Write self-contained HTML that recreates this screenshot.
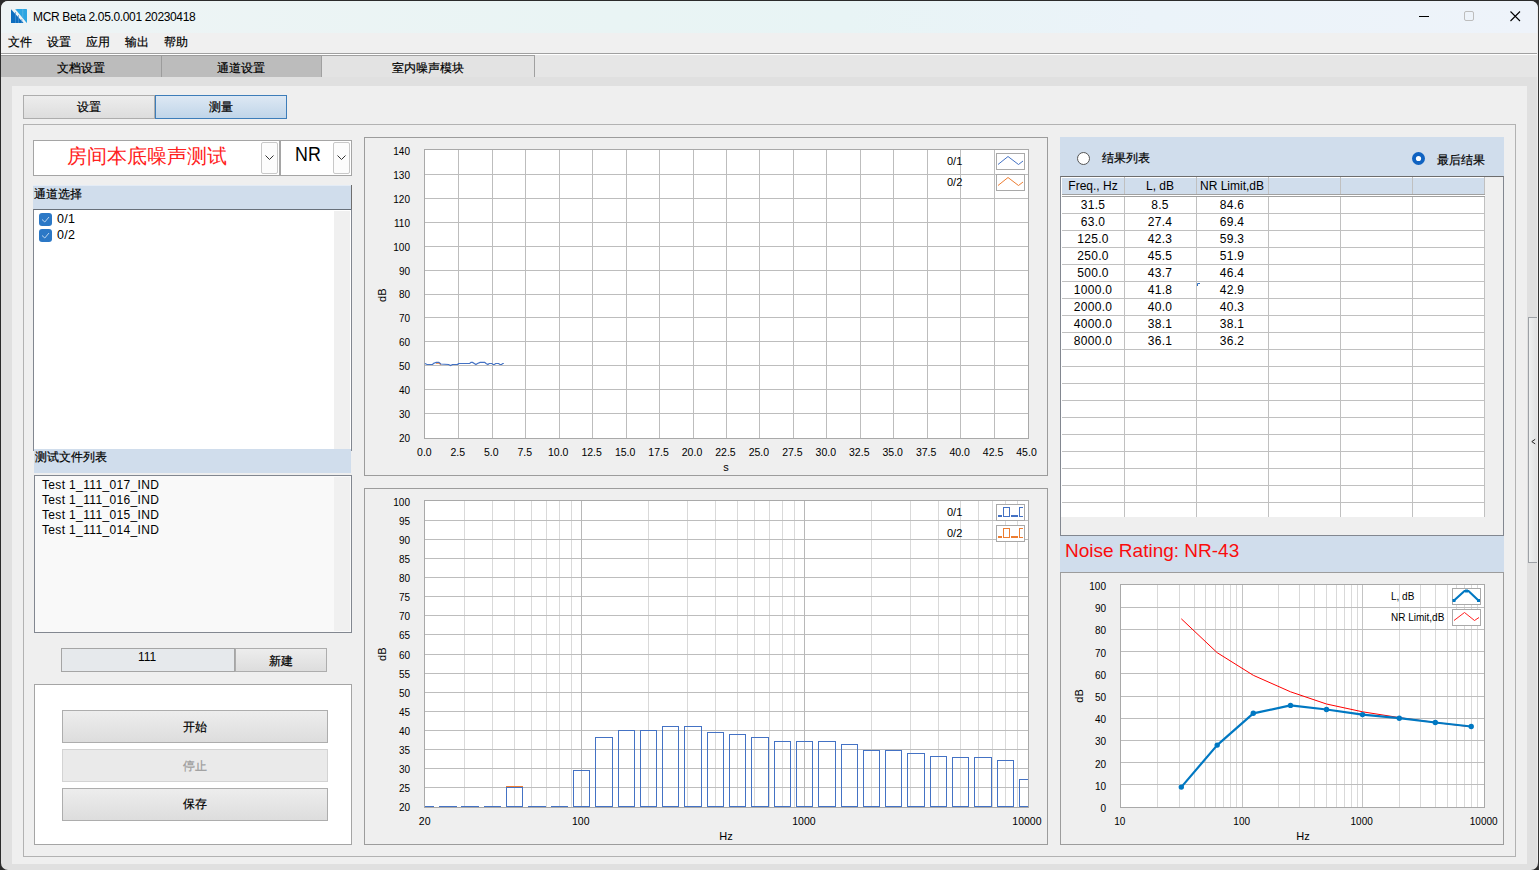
<!DOCTYPE html><html><head><meta charset="utf-8"><style>
*{margin:0;padding:0;box-sizing:border-box}
html,body{width:1539px;height:870px;overflow:hidden;background:#2b2b2b;font-family:"Liberation Sans", sans-serif;color:#000}
.t{position:absolute;white-space:nowrap;line-height:1}
.cj{-webkit-text-stroke:0.2px currentColor}
.btn{-webkit-text-stroke:0.2px currentColor;position:absolute;background:linear-gradient(#ededed,#dddddd);border:1px solid #adadad;font-size:12px;text-align:center}
svg{position:absolute;left:0;top:0}
</style></head><body>

<div style="position:absolute;left:1px;top:1px;width:1537px;height:869px;background:#e0e0e0;border-radius:7px;overflow:hidden"></div>
<div style="position:absolute;left:1px;top:1px;width:1537px;height:32px;background:linear-gradient(90deg,#eef4f5 0%,#e9f4f4 40%,#e8f4f5 55%,#ebf3f9 75%,#eef3fa 100%);border-radius:7px 7px 0 0"></div>
<div class="t" style="left:33px;top:11px;font-size:12px;letter-spacing:-0.35px;color:#000">MCR Beta 2.05.0.001 20230418</div>
<svg width="40" height="30" style="left:0;top:0">
<polygon points="11,9.3 23.6,23 11,23" fill="#0d6ebf"/>
<polygon points="15.2,9 26.4,9 27,9.6 27,23 26.8,23" fill="#2ba5e2"/>
<rect x="15.1" y="12" width="0.7" height="11" fill="#4c93d0"/>
<rect x="18.3" y="15" width="0.7" height="8" fill="#4c93d0"/>
<rect x="21.5" y="19" width="0.7" height="4" fill="#4c93d0"/>
<rect x="16.3" y="9" width="0.6" height="2" fill="#62b8e6"/>
<rect x="22.5" y="9" width="0.7" height="9" fill="#62b8e6"/>
</svg>
<div style="position:absolute;left:1419px;top:16px;width:10px;height:1px;background:#000"></div>
<div style="position:absolute;left:1464px;top:11px;width:10px;height:10px;border:1px solid #bdbdbd;border-radius:2px"></div>
<svg width="1539" height="40" style="left:0;top:0"><path d="M1510.5 11.5 L1520 21 M1520 11.5 L1510.5 21" stroke="#000" stroke-width="1.1"/></svg>
<div style="position:absolute;left:1px;top:33px;width:1537px;height:20px;background:#f0f0f0"></div>
<div class="t" style="left:8px;top:36px;font-size:12px;-webkit-text-stroke:0.2px #000">文件</div>
<div class="t" style="left:47px;top:36px;font-size:12px;-webkit-text-stroke:0.2px #000">设置</div>
<div class="t" style="left:86px;top:36px;font-size:12px;-webkit-text-stroke:0.2px #000">应用</div>
<div class="t" style="left:125px;top:36px;font-size:12px;-webkit-text-stroke:0.2px #000">输出</div>
<div class="t" style="left:164px;top:36px;font-size:12px;-webkit-text-stroke:0.2px #000">帮助</div>
<div style="position:absolute;left:1px;top:53px;width:1537px;height:1px;background:#a0a0a0"></div>
<div style="position:absolute;left:1px;top:54px;width:1537px;height:1px;background:#ffffff"></div>
<div style="position:absolute;left:1px;top:55px;width:1537px;height:22px;background:#e6e6e6"></div>
<div style="position:absolute;left:1px;top:55px;width:161px;height:22px;background:#bcbcbc;border-top:1px solid #9c9c9c;border-right:1px solid #9c9c9c"></div>
<div style="position:absolute;left:161px;top:55px;width:161px;height:22px;background:#bcbcbc;border:1px solid #9c9c9c;border-bottom:none"></div>
<div style="position:absolute;left:321px;top:55px;width:214px;height:22px;background:#e3e3e3;border:1px solid #a0a0a0;border-bottom:none"></div>
<div class="t" style="left:57px;top:62px;font-size:12px;-webkit-text-stroke:0.2px #000">文档设置</div>
<div class="t" style="left:217px;top:62px;font-size:12px;-webkit-text-stroke:0.2px #000">通道设置</div>
<div class="t" style="left:392px;top:62px;font-size:12px;-webkit-text-stroke:0.2px #000">室内噪声模块</div>
<div style="position:absolute;left:1px;top:77px;width:1537px;height:9px;background:#e0e0e0"></div>
<div style="position:absolute;left:12px;top:86px;width:1515px;height:778px;background:#efefef"></div>
<div class="btn" style="left:23px;top:95px;width:132px;height:24px;line-height:22px">设置</div>
<div class="btn" style="left:155px;top:95px;width:132px;height:24px;line-height:22px;background:linear-gradient(#dde8f4,#c0d5e9);border-color:#3d7db9">测量</div>
<div style="position:absolute;left:23px;top:124px;width:1493px;height:733px;border:1px solid #b2b2b2"></div>
<div style="position:absolute;left:33px;top:140px;width:247px;height:36px;background:#fff;border:1px solid #a5a5a5"></div>
<div style="position:absolute;left:261px;top:142px;width:17px;height:32px;background:#fcfcfc;border:1px solid #c8c8c8;border-radius:2px"></div>
<div style="position:absolute;left:280px;top:140px;width:72px;height:36px;background:#fff;border:1px solid #a5a5a5"></div>
<div style="position:absolute;left:333px;top:142px;width:17px;height:32px;background:#fcfcfc;border:1px solid #c8c8c8;border-radius:2px"></div>
<svg width="400" height="200"><path d="M265.5 155.5 L269.5 159.5 L273.5 155.5 M337.5 155.5 L341.5 159.5 L345.5 155.5" fill="none" stroke="#333" stroke-width="1"/></svg>
<div class="t" style="left:67px;top:146px;font-size:20px;color:#ff2020;font-weight:200">房间本底噪声测试</div>
<div class="t" style="left:295px;top:143px;font-size:21px;transform:scaleX(0.85);transform-origin:0 0">NR</div>
<div style="position:absolute;left:33px;top:185px;width:319px;height:25px;background:linear-gradient(#e4ecf6 0,#e4ecf6 1px,#d0ddec 1px);border-right:1px solid #6e6e6e"></div>
<div class="t" style="left:34px;top:188px;font-size:12px;-webkit-text-stroke:0.2px #000">通道选择</div>
<div style="position:absolute;left:33px;top:209px;width:319px;height:242px;background:#fff;border:1px solid #828790;border-top:1px solid #68707a;border-bottom:none"></div>
<div style="position:absolute;left:334px;top:211px;width:16px;height:240px;background:#f0f0f0"></div>
<div style="position:absolute;left:39px;top:213px;width:13px;height:13px;background:#2b78c6;border-radius:3px"></div>
<svg width="60" height="260"><path d="M42 219.5 L44.8 222 L49 217" fill="none" stroke="#bcd6f0" stroke-width="1"/></svg>
<div class="t" style="left:57px;top:213px;font-size:12.5px;letter-spacing:0.3px">0/1</div>
<div style="position:absolute;left:39px;top:229px;width:13px;height:13px;background:#2b78c6;border-radius:3px"></div>
<svg width="60" height="260"><path d="M42 235.5 L44.8 238 L49 233" fill="none" stroke="#bcd6f0" stroke-width="1"/></svg>
<div class="t" style="left:57px;top:229px;font-size:12.5px;letter-spacing:0.3px">0/2</div>
<div style="position:absolute;left:34px;top:449px;width:317px;height:24px;background:#d0ddec"></div>
<div class="t" style="left:35px;top:451px;font-size:12px;-webkit-text-stroke:0.2px #000">测试文件列表</div>
<div style="position:absolute;left:34px;top:475px;width:318px;height:158px;background:#f9f9f9;border:1px solid #828790"></div>
<div style="position:absolute;left:334px;top:477px;width:16px;height:154px;background:#f0f0f0"></div>
<div class="t" style="left:42px;top:479px;font-size:12px;letter-spacing:0.35px">Test 1_111_017_IND</div>
<div class="t" style="left:42px;top:494px;font-size:12px;letter-spacing:0.35px">Test 1_111_016_IND</div>
<div class="t" style="left:42px;top:509px;font-size:12px;letter-spacing:0.35px">Test 1_111_015_IND</div>
<div class="t" style="left:42px;top:524px;font-size:12px;letter-spacing:0.35px">Test 1_111_014_IND</div>
<div style="position:absolute;left:61px;top:648px;width:174px;height:24px;background:#e6e9ec;border:1px solid #a5a5a5"></div>
<div class="t" style="left:138px;top:651px;font-size:12px">111</div>
<div class="btn" style="left:235px;top:648px;width:92px;height:24px;line-height:24px">新建</div>
<div style="position:absolute;left:34px;top:684px;width:318px;height:161px;background:#fff;border:1px solid #a5a5a5"></div>
<div class="btn" style="left:62px;top:710px;width:266px;height:33px;line-height:33px">开始</div>
<div class="btn" style="left:62px;top:749px;width:266px;height:33px;line-height:33px;background:#eaeaea;border-color:#d3d3d3;color:#9a9a9a">停止</div>
<div class="btn" style="left:62px;top:788px;width:266px;height:33px;line-height:31px">保存</div>
<svg width="1539" height="870" style="left:0;top:0" shape-rendering="crispEdges">
<rect x="364.5" y="137.5" width="683" height="338" fill="none" stroke="#9c9c9c"/>
<rect x="424" y="149" width="605" height="290" fill="#fff"/>
<rect x="458" y="149" width="1" height="290" fill="#bdbdbd"/>
<rect x="492" y="149" width="1" height="290" fill="#bdbdbd"/>
<rect x="525" y="149" width="1" height="290" fill="#bdbdbd"/>
<rect x="559" y="149" width="1" height="290" fill="#bdbdbd"/>
<rect x="592" y="149" width="1" height="290" fill="#bdbdbd"/>
<rect x="626" y="149" width="1" height="290" fill="#bdbdbd"/>
<rect x="659" y="149" width="1" height="290" fill="#bdbdbd"/>
<rect x="693" y="149" width="1" height="290" fill="#bdbdbd"/>
<rect x="726" y="149" width="1" height="290" fill="#bdbdbd"/>
<rect x="759" y="149" width="1" height="290" fill="#bdbdbd"/>
<rect x="793" y="149" width="1" height="290" fill="#bdbdbd"/>
<rect x="826" y="149" width="1" height="290" fill="#bdbdbd"/>
<rect x="860" y="149" width="1" height="290" fill="#bdbdbd"/>
<rect x="893" y="149" width="1" height="290" fill="#bdbdbd"/>
<rect x="927" y="149" width="1" height="290" fill="#bdbdbd"/>
<rect x="960" y="149" width="1" height="290" fill="#bdbdbd"/>
<rect x="994" y="149" width="1" height="290" fill="#bdbdbd"/>
<rect x="424" y="413" width="605" height="1" fill="#bdbdbd"/>
<rect x="424" y="389" width="605" height="1" fill="#bdbdbd"/>
<rect x="424" y="365" width="605" height="1" fill="#bdbdbd"/>
<rect x="424" y="341" width="605" height="1" fill="#bdbdbd"/>
<rect x="424" y="317" width="605" height="1" fill="#bdbdbd"/>
<rect x="424" y="294" width="605" height="1" fill="#bdbdbd"/>
<rect x="424" y="270" width="605" height="1" fill="#bdbdbd"/>
<rect x="424" y="246" width="605" height="1" fill="#bdbdbd"/>
<rect x="424" y="222" width="605" height="1" fill="#bdbdbd"/>
<rect x="424" y="198" width="605" height="1" fill="#bdbdbd"/>
<rect x="424" y="174" width="605" height="1" fill="#bdbdbd"/>
<rect x="424.5" y="149.5" width="604" height="289" fill="none" stroke="#a9a9a9"/>
</svg>
<svg width="1539" height="870" style="left:0;top:0" font-family="Liberation Sans, sans-serif">
<text x="410" y="442" font-size="10" text-anchor="end" >20</text>
<text x="410" y="418" font-size="10" text-anchor="end" >30</text>
<text x="410" y="394" font-size="10" text-anchor="end" >40</text>
<text x="410" y="370" font-size="10" text-anchor="end" >50</text>
<text x="410" y="346" font-size="10" text-anchor="end" >60</text>
<text x="410" y="322" font-size="10" text-anchor="end" >70</text>
<text x="410" y="298" font-size="10" text-anchor="end" >80</text>
<text x="410" y="275" font-size="10" text-anchor="end" >90</text>
<text x="410" y="251" font-size="10" text-anchor="end" >100</text>
<text x="410" y="227" font-size="10" text-anchor="end" >110</text>
<text x="410" y="203" font-size="10" text-anchor="end" >120</text>
<text x="410" y="179" font-size="10" text-anchor="end" >130</text>
<text x="410" y="155" font-size="10" text-anchor="end" >140</text>
<text x="424.4" y="456" font-size="10.5" text-anchor="middle" >0.0</text>
<text x="457.84999999999997" y="456" font-size="10.5" text-anchor="middle" >2.5</text>
<text x="491.29999999999995" y="456" font-size="10.5" text-anchor="middle" >5.0</text>
<text x="524.75" y="456" font-size="10.5" text-anchor="middle" >7.5</text>
<text x="558.2" y="456" font-size="10.5" text-anchor="middle" >10.0</text>
<text x="591.65" y="456" font-size="10.5" text-anchor="middle" >12.5</text>
<text x="625.1" y="456" font-size="10.5" text-anchor="middle" >15.0</text>
<text x="658.55" y="456" font-size="10.5" text-anchor="middle" >17.5</text>
<text x="692.0" y="456" font-size="10.5" text-anchor="middle" >20.0</text>
<text x="725.45" y="456" font-size="10.5" text-anchor="middle" >22.5</text>
<text x="758.9" y="456" font-size="10.5" text-anchor="middle" >25.0</text>
<text x="792.35" y="456" font-size="10.5" text-anchor="middle" >27.5</text>
<text x="825.8" y="456" font-size="10.5" text-anchor="middle" >30.0</text>
<text x="859.25" y="456" font-size="10.5" text-anchor="middle" >32.5</text>
<text x="892.7" y="456" font-size="10.5" text-anchor="middle" >35.0</text>
<text x="926.1500000000001" y="456" font-size="10.5" text-anchor="middle" >37.5</text>
<text x="959.6" y="456" font-size="10.5" text-anchor="middle" >40.0</text>
<text x="993.0500000000001" y="456" font-size="10.5" text-anchor="middle" >42.5</text>
<text x="1026.5" y="456" font-size="10.5" text-anchor="middle" >45.0</text>
<text x="726" y="471" font-size="11" text-anchor="middle" >s</text>
<text x="386.5" y="295.2" font-size="11" text-anchor="middle" transform="rotate(-90 386.5 295.2)">dB</text>
<text x="947" y="165" font-size="11" text-anchor="start" >0/1</text>
<text x="947" y="186" font-size="11" text-anchor="start" >0/2</text>
<rect x="996.5" y="153.5" width="28" height="16" fill="#fff" stroke="#a9a9a9"/>
<rect x="996.5" y="174.5" width="28" height="16" fill="#fff" stroke="#a9a9a9"/>
<path d="M998 164.5 L1008 156.5 L1018.5 164.5 L1023 161" fill="none" stroke="#4472c4" stroke-width="1"/>
<path d="M998 185.5 L1008 177.5 L1018.5 185.5 L1023 182" fill="none" stroke="#ed7d31" stroke-width="1"/>
<polyline points="436,363.2 439,363.2 441,364.5" fill="none" stroke="#ed7d31" stroke-width="1.2"/>
<polyline points="424.9,363.5 427.1,364.5 432.7,364.5 433.3,363.5 436.2,362.4 438.8,362.4 440.8,364.0 448.6,364.5 450.5,365.5 452.5,364.5 458.0,364.5 458.3,363.5 469.7,363.5 471.0,362.4 472.6,362.4 474.3,363.5 475.9,364.5 477.5,363.5 480.1,362.4 484.7,362.4 486.0,363.5 487.9,364.5 489.2,363.5 491.8,363.5 493.1,364.5 494.4,364.5 495.7,363.5 498.6,363.5 499.9,364.5 501.5,364.5 502.8,363.5 503.8,363.5" fill="none" stroke="#4472c4" stroke-width="1.2"/>
</svg>
<svg width="1539" height="870" style="left:0;top:0" shape-rendering="crispEdges">
<rect x="364.5" y="488.5" width="683" height="356" fill="none" stroke="#9c9c9c"/>
<rect x="424" y="500" width="605" height="308" fill="#fff"/>
<rect x="464" y="500" width="1" height="308" fill="#d9d9d9"/>
<rect x="492" y="500" width="1" height="308" fill="#d9d9d9"/>
<rect x="514" y="500" width="1" height="308" fill="#d9d9d9"/>
<rect x="531" y="500" width="1" height="308" fill="#d9d9d9"/>
<rect x="546" y="500" width="1" height="308" fill="#d9d9d9"/>
<rect x="559" y="500" width="1" height="308" fill="#d9d9d9"/>
<rect x="571" y="500" width="1" height="308" fill="#d9d9d9"/>
<rect x="648" y="500" width="1" height="308" fill="#d9d9d9"/>
<rect x="687" y="500" width="1" height="308" fill="#d9d9d9"/>
<rect x="715" y="500" width="1" height="308" fill="#d9d9d9"/>
<rect x="737" y="500" width="1" height="308" fill="#d9d9d9"/>
<rect x="754" y="500" width="1" height="308" fill="#d9d9d9"/>
<rect x="769" y="500" width="1" height="308" fill="#d9d9d9"/>
<rect x="782" y="500" width="1" height="308" fill="#d9d9d9"/>
<rect x="794" y="500" width="1" height="308" fill="#d9d9d9"/>
<rect x="871" y="500" width="1" height="308" fill="#d9d9d9"/>
<rect x="910" y="500" width="1" height="308" fill="#d9d9d9"/>
<rect x="938" y="500" width="1" height="308" fill="#d9d9d9"/>
<rect x="960" y="500" width="1" height="308" fill="#d9d9d9"/>
<rect x="978" y="500" width="1" height="308" fill="#d9d9d9"/>
<rect x="992" y="500" width="1" height="308" fill="#d9d9d9"/>
<rect x="1005" y="500" width="1" height="308" fill="#d9d9d9"/>
<rect x="1017" y="500" width="1" height="308" fill="#d9d9d9"/>
<rect x="424" y="787" width="605" height="1" fill="#bdbdbd"/>
<rect x="424" y="768" width="605" height="1" fill="#bdbdbd"/>
<rect x="424" y="749" width="605" height="1" fill="#bdbdbd"/>
<rect x="424" y="730" width="605" height="1" fill="#bdbdbd"/>
<rect x="424" y="711" width="605" height="1" fill="#bdbdbd"/>
<rect x="424" y="692" width="605" height="1" fill="#bdbdbd"/>
<rect x="424" y="673" width="605" height="1" fill="#bdbdbd"/>
<rect x="424" y="654" width="605" height="1" fill="#bdbdbd"/>
<rect x="424" y="634" width="605" height="1" fill="#bdbdbd"/>
<rect x="424" y="615" width="605" height="1" fill="#bdbdbd"/>
<rect x="424" y="596" width="605" height="1" fill="#bdbdbd"/>
<rect x="424" y="577" width="605" height="1" fill="#bdbdbd"/>
<rect x="424" y="558" width="605" height="1" fill="#bdbdbd"/>
<rect x="424" y="539" width="605" height="1" fill="#bdbdbd"/>
<rect x="424" y="520" width="605" height="1" fill="#bdbdbd"/>
<rect x="581" y="500" width="1" height="308" fill="#b8b8b8"/>
<rect x="804" y="500" width="1" height="308" fill="#b8b8b8"/>
<rect x="424.5" y="500.5" width="604" height="307" fill="none" stroke="#a9a9a9"/>
</svg>
<svg width="1539" height="870" style="left:0;top:0" font-family="Liberation Sans, sans-serif">
<text x="410" y="811" font-size="10" text-anchor="end" >20</text>
<text x="410" y="792" font-size="10" text-anchor="end" >25</text>
<text x="410" y="773" font-size="10" text-anchor="end" >30</text>
<text x="410" y="754" font-size="10" text-anchor="end" >35</text>
<text x="410" y="735" font-size="10" text-anchor="end" >40</text>
<text x="410" y="716" font-size="10" text-anchor="end" >45</text>
<text x="410" y="697" font-size="10" text-anchor="end" >50</text>
<text x="410" y="678" font-size="10" text-anchor="end" >55</text>
<text x="410" y="659" font-size="10" text-anchor="end" >60</text>
<text x="410" y="639" font-size="10" text-anchor="end" >65</text>
<text x="410" y="620" font-size="10" text-anchor="end" >70</text>
<text x="410" y="601" font-size="10" text-anchor="end" >75</text>
<text x="410" y="582" font-size="10" text-anchor="end" >80</text>
<text x="410" y="563" font-size="10" text-anchor="end" >85</text>
<text x="410" y="544" font-size="10" text-anchor="end" >90</text>
<text x="410" y="525" font-size="10" text-anchor="end" >95</text>
<text x="410" y="506" font-size="10" text-anchor="end" >100</text>
<text x="424.7" y="825" font-size="10.5" text-anchor="middle" >20</text>
<text x="580.8" y="825" font-size="10.5" text-anchor="middle" >100</text>
<text x="803.9" y="825" font-size="10.5" text-anchor="middle" >1000</text>
<text x="1026.9" y="825" font-size="10.5" text-anchor="middle" >10000</text>
<text x="726" y="840" font-size="11" text-anchor="middle" >Hz</text>
<text x="386.5" y="654.2" font-size="11" text-anchor="middle" transform="rotate(-90 386.5 654.2)">dB</text>
<text x="947" y="516" font-size="11" text-anchor="start" >0/1</text>
<text x="947" y="537" font-size="11" text-anchor="start" >0/2</text>
<rect x="996.5" y="504.5" width="28" height="16" fill="#fff" stroke="#a9a9a9"/>
<rect x="996.5" y="525.5" width="28" height="16" fill="#fff" stroke="#a9a9a9"/>
<g shape-rendering="crispEdges"><rect x="998" y="515" width="4" height="2" fill="#4472c4"/><rect x="1003.5" y="507.5" width="6" height="9" fill="none" stroke="#4472c4"/><rect x="1011" y="515" width="7" height="2" fill="#4472c4"/><path d="M1023 507.5 H1019.5 V516.5 H1023" fill="none" stroke="#4472c4"/></g>
<g shape-rendering="crispEdges"><rect x="998" y="536" width="4" height="2" fill="#ed7d31"/><rect x="1003.5" y="528.5" width="6" height="9" fill="none" stroke="#ed7d31"/><rect x="1011" y="536" width="7" height="2" fill="#ed7d31"/><path d="M1023 528.5 H1019.5 V537.5 H1023" fill="none" stroke="#ed7d31"/></g>
<clipPath id="c2"><rect x="425" y="500" width="603" height="307"/></clipPath><g clip-path="url(#c2)" shape-rendering="crispEdges">
<rect x="506" y="786" width="17" height="1" fill="#ed7d31"/>
<rect x="424" y="806" width="10" height="1" fill="#4472c4"/>
<rect x="439" y="806" width="18" height="1" fill="#4472c4"/>
<rect x="461" y="806" width="18" height="1" fill="#4472c4"/>
<rect x="484" y="806" width="17" height="1" fill="#4472c4"/>
<rect x="506.5" y="787.5" width="16" height="19" fill="none" stroke="#4472c4"/>
<rect x="528" y="806" width="18" height="1" fill="#4472c4"/>
<rect x="551" y="806" width="17" height="1" fill="#4472c4"/>
<rect x="573.5" y="770.5" width="16" height="36" fill="none" stroke="#4472c4"/>
<rect x="595.5" y="737.5" width="17" height="69" fill="none" stroke="#4472c4"/>
<rect x="618.5" y="730.5" width="16" height="76" fill="none" stroke="#4472c4"/>
<rect x="640.5" y="730.5" width="16" height="76" fill="none" stroke="#4472c4"/>
<rect x="662.5" y="726.5" width="16" height="80" fill="none" stroke="#4472c4"/>
<rect x="684.5" y="726.5" width="17" height="80" fill="none" stroke="#4472c4"/>
<rect x="707.5" y="732.5" width="16" height="74" fill="none" stroke="#4472c4"/>
<rect x="729.5" y="734.5" width="16" height="72" fill="none" stroke="#4472c4"/>
<rect x="751.5" y="737.5" width="17" height="69" fill="none" stroke="#4472c4"/>
<rect x="774.5" y="741.5" width="16" height="65" fill="none" stroke="#4472c4"/>
<rect x="796.5" y="741.5" width="16" height="65" fill="none" stroke="#4472c4"/>
<rect x="818.5" y="741.5" width="17" height="65" fill="none" stroke="#4472c4"/>
<rect x="841.5" y="744.5" width="16" height="62" fill="none" stroke="#4472c4"/>
<rect x="863.5" y="750.5" width="16" height="56" fill="none" stroke="#4472c4"/>
<rect x="885.5" y="750.5" width="16" height="56" fill="none" stroke="#4472c4"/>
<rect x="907.5" y="753.5" width="17" height="53" fill="none" stroke="#4472c4"/>
<rect x="930.5" y="756.5" width="16" height="50" fill="none" stroke="#4472c4"/>
<rect x="952.5" y="757.5" width="16" height="49" fill="none" stroke="#4472c4"/>
<rect x="974.5" y="757.5" width="17" height="49" fill="none" stroke="#4472c4"/>
<rect x="997.5" y="760.5" width="16" height="46" fill="none" stroke="#4472c4"/>
<rect x="1019.5" y="779.5" width="17" height="27" fill="none" stroke="#4472c4"/>
</g></svg>
<div style="position:absolute;left:1060px;top:137px;width:444px;height:40px;background:#d0ddec"></div>
<svg width="1539" height="300"><circle cx="1083.5" cy="158.5" r="6" fill="#fff" stroke="#555" stroke-width="1"/><circle cx="1418.5" cy="158.5" r="6.5" fill="#0f62c1"/><circle cx="1418.5" cy="158.5" r="2.6" fill="#fff"/></svg>
<div class="t" style="left:1102px;top:152px;font-size:12px;-webkit-text-stroke:0.2px #000">结果列表</div>
<div class="t" style="left:1437px;top:154px;font-size:12px;-webkit-text-stroke:0.2px #000">最后结果</div>
<div style="position:absolute;left:1060px;top:176px;width:444px;height:360px;background:#efefef;border:1px solid #828790;border-top-color:#6d6d6d"></div>
<div style="position:absolute;left:1061px;top:177px;width:424px;height:340px;background:#fff"></div>
<div style="position:absolute;left:1062px;top:178px;width:423px;height:16px;background:#d0ddec"></div>
<svg width="1539" height="870" shape-rendering="crispEdges">
<rect x="1062" y="194" width="423" height="1" fill="#a0a0a0"/>
<rect x="1062" y="196" width="423" height="1" fill="#a0a0a0"/>
<rect x="1124" y="177" width="1" height="17" fill="#c0c0c0"/>
<rect x="1124" y="197" width="1" height="320" fill="#c0c0c0"/>
<rect x="1196" y="177" width="1" height="17" fill="#c0c0c0"/>
<rect x="1196" y="197" width="1" height="320" fill="#c0c0c0"/>
<rect x="1268" y="177" width="1" height="17" fill="#c0c0c0"/>
<rect x="1268" y="197" width="1" height="320" fill="#c0c0c0"/>
<rect x="1340" y="177" width="1" height="17" fill="#c0c0c0"/>
<rect x="1340" y="197" width="1" height="320" fill="#c0c0c0"/>
<rect x="1412" y="177" width="1" height="17" fill="#c0c0c0"/>
<rect x="1412" y="197" width="1" height="320" fill="#c0c0c0"/>
<rect x="1484" y="177" width="1" height="17" fill="#c0c0c0"/>
<rect x="1484" y="197" width="1" height="320" fill="#c0c0c0"/>
<rect x="1062" y="213" width="423" height="1" fill="#c0c0c0"/>
<rect x="1062" y="230" width="423" height="1" fill="#c0c0c0"/>
<rect x="1062" y="247" width="423" height="1" fill="#c0c0c0"/>
<rect x="1062" y="264" width="423" height="1" fill="#c0c0c0"/>
<rect x="1062" y="281" width="423" height="1" fill="#c0c0c0"/>
<rect x="1062" y="298" width="423" height="1" fill="#c0c0c0"/>
<rect x="1062" y="315" width="423" height="1" fill="#c0c0c0"/>
<rect x="1062" y="332" width="423" height="1" fill="#c0c0c0"/>
<rect x="1062" y="349" width="423" height="1" fill="#c0c0c0"/>
<rect x="1062" y="366" width="423" height="1" fill="#c0c0c0"/>
<rect x="1062" y="383" width="423" height="1" fill="#c0c0c0"/>
<rect x="1062" y="400" width="423" height="1" fill="#c0c0c0"/>
<rect x="1062" y="417" width="423" height="1" fill="#c0c0c0"/>
<rect x="1062" y="434" width="423" height="1" fill="#c0c0c0"/>
<rect x="1062" y="451" width="423" height="1" fill="#c0c0c0"/>
<rect x="1062" y="468" width="423" height="1" fill="#c0c0c0"/>
<rect x="1062" y="485" width="423" height="1" fill="#c0c0c0"/>
<rect x="1062" y="502" width="423" height="1" fill="#c0c0c0"/>
</svg>
<div class="t" style="left:1053px;top:180px;width:80px;text-align:center;font-size:12px">Freq., Hz</div>
<div class="t" style="left:1120px;top:180px;width:80px;text-align:center;font-size:12px">L, dB</div>
<div class="t" style="left:1192px;top:180px;width:80px;text-align:center;font-size:12px">NR Limit,dB</div>
<div class="t" style="left:1053px;top:199px;width:80px;text-align:center;font-size:12px;letter-spacing:0.3px">31.5</div>
<div class="t" style="left:1120px;top:199px;width:80px;text-align:center;font-size:12px;letter-spacing:0.3px">8.5</div>
<div class="t" style="left:1192px;top:199px;width:80px;text-align:center;font-size:12px;letter-spacing:0.3px">84.6</div>
<div class="t" style="left:1053px;top:216px;width:80px;text-align:center;font-size:12px;letter-spacing:0.3px">63.0</div>
<div class="t" style="left:1120px;top:216px;width:80px;text-align:center;font-size:12px;letter-spacing:0.3px">27.4</div>
<div class="t" style="left:1192px;top:216px;width:80px;text-align:center;font-size:12px;letter-spacing:0.3px">69.4</div>
<div class="t" style="left:1053px;top:233px;width:80px;text-align:center;font-size:12px;letter-spacing:0.3px">125.0</div>
<div class="t" style="left:1120px;top:233px;width:80px;text-align:center;font-size:12px;letter-spacing:0.3px">42.3</div>
<div class="t" style="left:1192px;top:233px;width:80px;text-align:center;font-size:12px;letter-spacing:0.3px">59.3</div>
<div class="t" style="left:1053px;top:250px;width:80px;text-align:center;font-size:12px;letter-spacing:0.3px">250.0</div>
<div class="t" style="left:1120px;top:250px;width:80px;text-align:center;font-size:12px;letter-spacing:0.3px">45.5</div>
<div class="t" style="left:1192px;top:250px;width:80px;text-align:center;font-size:12px;letter-spacing:0.3px">51.9</div>
<div class="t" style="left:1053px;top:267px;width:80px;text-align:center;font-size:12px;letter-spacing:0.3px">500.0</div>
<div class="t" style="left:1120px;top:267px;width:80px;text-align:center;font-size:12px;letter-spacing:0.3px">43.7</div>
<div class="t" style="left:1192px;top:267px;width:80px;text-align:center;font-size:12px;letter-spacing:0.3px">46.4</div>
<div class="t" style="left:1053px;top:284px;width:80px;text-align:center;font-size:12px;letter-spacing:0.3px">1000.0</div>
<div class="t" style="left:1120px;top:284px;width:80px;text-align:center;font-size:12px;letter-spacing:0.3px">41.8</div>
<div class="t" style="left:1192px;top:284px;width:80px;text-align:center;font-size:12px;letter-spacing:0.3px">42.9</div>
<div class="t" style="left:1053px;top:301px;width:80px;text-align:center;font-size:12px;letter-spacing:0.3px">2000.0</div>
<div class="t" style="left:1120px;top:301px;width:80px;text-align:center;font-size:12px;letter-spacing:0.3px">40.0</div>
<div class="t" style="left:1192px;top:301px;width:80px;text-align:center;font-size:12px;letter-spacing:0.3px">40.3</div>
<div class="t" style="left:1053px;top:318px;width:80px;text-align:center;font-size:12px;letter-spacing:0.3px">4000.0</div>
<div class="t" style="left:1120px;top:318px;width:80px;text-align:center;font-size:12px;letter-spacing:0.3px">38.1</div>
<div class="t" style="left:1192px;top:318px;width:80px;text-align:center;font-size:12px;letter-spacing:0.3px">38.1</div>
<div class="t" style="left:1053px;top:335px;width:80px;text-align:center;font-size:12px;letter-spacing:0.3px">8000.0</div>
<div class="t" style="left:1120px;top:335px;width:80px;text-align:center;font-size:12px;letter-spacing:0.3px">36.1</div>
<div class="t" style="left:1192px;top:335px;width:80px;text-align:center;font-size:12px;letter-spacing:0.3px">36.2</div>
<svg width="1539" height="870"><path d="M1197.5 286 V283.5 H1200" fill="none" stroke="#3070c0" stroke-width="1"/></svg>
<div style="position:absolute;left:1060px;top:536px;width:444px;height:36px;background:#d0ddec"></div>
<div class="t" style="left:1065px;top:541px;font-size:19px;color:#fa0c0c">Noise Rating: NR-43</div>
<svg width="1539" height="870" style="left:0;top:0" shape-rendering="crispEdges">
<rect x="1060.5" y="572.5" width="443" height="272" fill="#efefef" stroke="#9c9c9c"/>
<rect x="1120" y="584" width="365" height="224" fill="#fff"/>
<rect x="1157" y="584" width="1" height="224" fill="#d9d9d9"/>
<rect x="1179" y="584" width="1" height="224" fill="#d9d9d9"/>
<rect x="1194" y="584" width="1" height="224" fill="#d9d9d9"/>
<rect x="1205" y="584" width="1" height="224" fill="#d9d9d9"/>
<rect x="1215" y="584" width="1" height="224" fill="#d9d9d9"/>
<rect x="1223" y="584" width="1" height="224" fill="#d9d9d9"/>
<rect x="1230" y="584" width="1" height="224" fill="#d9d9d9"/>
<rect x="1236" y="584" width="1" height="224" fill="#d9d9d9"/>
<rect x="1278" y="584" width="1" height="224" fill="#d9d9d9"/>
<rect x="1299" y="584" width="1" height="224" fill="#d9d9d9"/>
<rect x="1314" y="584" width="1" height="224" fill="#d9d9d9"/>
<rect x="1326" y="584" width="1" height="224" fill="#d9d9d9"/>
<rect x="1336" y="584" width="1" height="224" fill="#d9d9d9"/>
<rect x="1344" y="584" width="1" height="224" fill="#d9d9d9"/>
<rect x="1351" y="584" width="1" height="224" fill="#d9d9d9"/>
<rect x="1357" y="584" width="1" height="224" fill="#d9d9d9"/>
<rect x="1399" y="584" width="1" height="224" fill="#d9d9d9"/>
<rect x="1420" y="584" width="1" height="224" fill="#d9d9d9"/>
<rect x="1435" y="584" width="1" height="224" fill="#d9d9d9"/>
<rect x="1447" y="584" width="1" height="224" fill="#d9d9d9"/>
<rect x="1456" y="584" width="1" height="224" fill="#d9d9d9"/>
<rect x="1464" y="584" width="1" height="224" fill="#d9d9d9"/>
<rect x="1471" y="584" width="1" height="224" fill="#d9d9d9"/>
<rect x="1477" y="584" width="1" height="224" fill="#d9d9d9"/>
<rect x="1242" y="584" width="1" height="224" fill="#c4c4c4"/>
<rect x="1362" y="584" width="1" height="224" fill="#c4c4c4"/>
<rect x="1120" y="784" width="365" height="1" fill="#bdbdbd"/>
<rect x="1120" y="762" width="365" height="1" fill="#bdbdbd"/>
<rect x="1120" y="740" width="365" height="1" fill="#bdbdbd"/>
<rect x="1120" y="718" width="365" height="1" fill="#bdbdbd"/>
<rect x="1120" y="696" width="365" height="1" fill="#bdbdbd"/>
<rect x="1120" y="673" width="365" height="1" fill="#bdbdbd"/>
<rect x="1120" y="651" width="365" height="1" fill="#bdbdbd"/>
<rect x="1120" y="629" width="365" height="1" fill="#bdbdbd"/>
<rect x="1120" y="607" width="365" height="1" fill="#bdbdbd"/>
<rect x="1120.5" y="584.5" width="364" height="223" fill="none" stroke="#a9a9a9"/>
</svg>
<svg width="1539" height="870" style="left:0;top:0" font-family="Liberation Sans, sans-serif">
<text x="1106" y="812" font-size="10" text-anchor="end" >0</text>
<text x="1106" y="790" font-size="10" text-anchor="end" >10</text>
<text x="1106" y="768" font-size="10" text-anchor="end" >20</text>
<text x="1106" y="745" font-size="10" text-anchor="end" >30</text>
<text x="1106" y="723" font-size="10" text-anchor="end" >40</text>
<text x="1106" y="701" font-size="10" text-anchor="end" >50</text>
<text x="1106" y="679" font-size="10" text-anchor="end" >60</text>
<text x="1106" y="657" font-size="10" text-anchor="end" >70</text>
<text x="1106" y="634" font-size="10" text-anchor="end" >80</text>
<text x="1106" y="612" font-size="10" text-anchor="end" >90</text>
<text x="1106" y="590" font-size="10" text-anchor="end" >100</text>
<text x="1119.7" y="825" font-size="10" text-anchor="middle" >10</text>
<text x="1241.7" y="825" font-size="10" text-anchor="middle" >100</text>
<text x="1361.7" y="825" font-size="10" text-anchor="middle" >1000</text>
<text x="1483.7" y="825" font-size="10" text-anchor="middle" >10000</text>
<text x="1303" y="840" font-size="11" text-anchor="middle" >Hz</text>
<text x="1083" y="696" font-size="11" text-anchor="middle" transform="rotate(-90 1083 696)">dB</text>
<text x="1391" y="600" font-size="10" text-anchor="start" >L, dB</text>
<text x="1391" y="621" font-size="10" text-anchor="start" >NR Limit,dB</text>
<rect x="1452.5" y="588.5" width="28" height="16" fill="#fff" stroke="#a9a9a9"/>
<rect x="1452.5" y="609.5" width="28" height="16" fill="#fff" stroke="#a9a9a9"/>
<path d="M1454 600.5 L1464.5 591 L1468.5 591 L1478.5 600.5" fill="none" stroke="#0078c2" stroke-width="2.2"/>
<rect x="1452.5" y="599.0" width="3" height="3" fill="#0078c2"/>
<rect x="1465.0" y="589.5" width="3" height="3" fill="#0078c2"/>
<rect x="1477.0" y="599.0" width="3" height="3" fill="#0078c2"/>
<path d="M1454 620.5 L1464.5 612.5 L1474.5 620.5 L1479 617.5" fill="none" stroke="#ff2020" stroke-width="1"/>
<polyline points="1181.3,618.8 1217.2,652.7 1253.3,675.3 1290.5,691.8 1326.5,704.0 1362.5,711.8 1399.3,717.6 1435.3,722.5 1471.2,726.8" fill="none" stroke="#ff0000" stroke-width="1"/>
<polyline points="1181.3,787.1 1217.2,745.1 1253.3,713.3 1290.5,705.4 1326.5,709.5 1362.5,714.6 1399.3,718.2 1435.3,722.5 1471.2,726.5" fill="none" stroke="#0078c2" stroke-width="2.2" stroke-linejoin="round"/>
<circle cx="1181.3" cy="787.1" r="2.7" fill="#0078c2"/>
<circle cx="1217.2" cy="745.1" r="2.7" fill="#0078c2"/>
<circle cx="1253.3" cy="713.3" r="2.7" fill="#0078c2"/>
<circle cx="1290.5" cy="705.4" r="2.7" fill="#0078c2"/>
<circle cx="1326.5" cy="709.5" r="2.7" fill="#0078c2"/>
<circle cx="1362.5" cy="714.6" r="2.7" fill="#0078c2"/>
<circle cx="1399.3" cy="718.2" r="2.7" fill="#0078c2"/>
<circle cx="1435.3" cy="722.5" r="2.7" fill="#0078c2"/>
<circle cx="1471.2" cy="726.5" r="2.7" fill="#0078c2"/>
</svg>
<div style="position:absolute;left:1528px;top:317px;width:10px;height:246px;background:linear-gradient(90deg,#eef0f0,#dedfe0);border:1px solid #9da1a6;border-right:none"></div>
<svg width="1539" height="870"><path d="M1535.2 439.3 L1531.8 441.6 L1535.2 443.9" fill="none" stroke="#111" stroke-width="0.9"/></svg>
<div style="position:absolute;left:1537px;top:8px;width:1px;height:854px;background:#ebebeb"></div>
<div style="position:absolute;left:1538px;top:0px;width:1px;height:870px;background:#333"></div>
</body></html>
